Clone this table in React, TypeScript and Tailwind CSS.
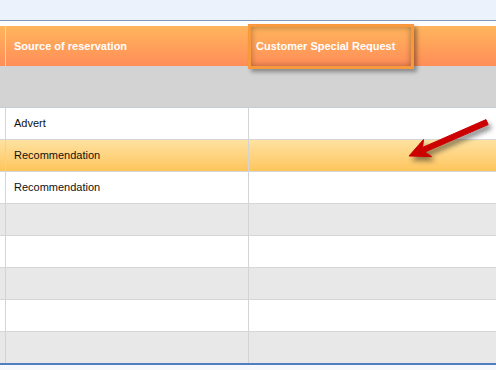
import React from "react";

const rows: { text: string; kind: "white" | "gray" | "hl" }[] = [
  { text: "Advert", kind: "white" },
  { text: "Recommendation", kind: "hl" },
  { text: "Recommendation", kind: "white" },
  { text: "", kind: "gray" },
  { text: "", kind: "white" },
  { text: "", kind: "gray" },
  { text: "", kind: "white" },
  { text: "", kind: "gray" },
];

export default function App() {
  return (
    <div
      className="relative w-[496px] h-[370px] overflow-hidden bg-[#f6f8fb] text-[11px]"
      style={{ fontFamily: '"Liberation Sans", Arial, sans-serif' }}
    >
      <div className="h-[21px] bg-[#ebf2fc] border-b border-[#7d9bb9]" />
      <div className="h-[5px] bg-white" />
      {/* header */}
      <div className="flex h-[40px] bg-gradient-to-b from-[#ffb55d] to-[#ff8d58] text-white font-bold">
        <div className="w-[6px] border-r border-[#ffd0a6]" />
        <div className="w-[243px] flex items-center pl-2 border-r border-[#ffa070]">Source of reservation</div>
        <div className="flex-1 flex items-center pl-[7px]">Customer Special Request</div>
      </div>
      {/* gray band */}
      <div className="h-[42px] bg-[#d3d3d3] border-b border-[#c5ccd4]" />
      {rows.map((r, i) => {
        const bg =
          r.kind === "white"
            ? "bg-white"
            : r.kind === "gray"
            ? "bg-[#e8e8e8]"
            : "bg-gradient-to-b from-[#fee2a0] to-[#fec55b]";
        const last = i === rows.length - 1;
        return (
          <div
            key={i}
            className={`flex ${last ? "h-[31px]" : "h-[32px] border-b border-[#d6d6d6]"} ${bg} text-[#111]`}
          >
            <div className="w-[6px] border-r border-[#d4d4d4]" />
            <div className="w-[243px] flex items-center pl-2 border-r border-[#d4d4d4]">{r.text}</div>
            <div className="flex-1" />
          </div>
        );
      })}
      <div className="h-[2px] bg-[#4f7fc0]" />

      {/* highlight box over header */}
      <div className="absolute left-[248px] top-[24px] w-[166px] h-[45px] border-[3px] border-[#f8993d] shadow-[inset_0_0_6px_rgba(0,0,0,0.35),3px_3px_4px_rgba(0,0,0,0.35)]" />

      {/* arrow */}
      <svg
        className="absolute left-0 top-0 pointer-events-none"
        width={496}
        height={370}
        viewBox="0 0 496 370"
        style={{ filter: "drop-shadow(3px 4px 2.5px rgba(0,0,0,0.45))" }}
      >
        <polygon
          points="409,156 423.5,139.5 422.6,147.4 486,119.6 488.2,124.6 424.8,152.1 431.5,156.6"
          fill="#cc0000"
          stroke="#cc0000"
          strokeWidth={1}
          strokeLinejoin="round"
        />
      </svg>
    </div>
  );
}
